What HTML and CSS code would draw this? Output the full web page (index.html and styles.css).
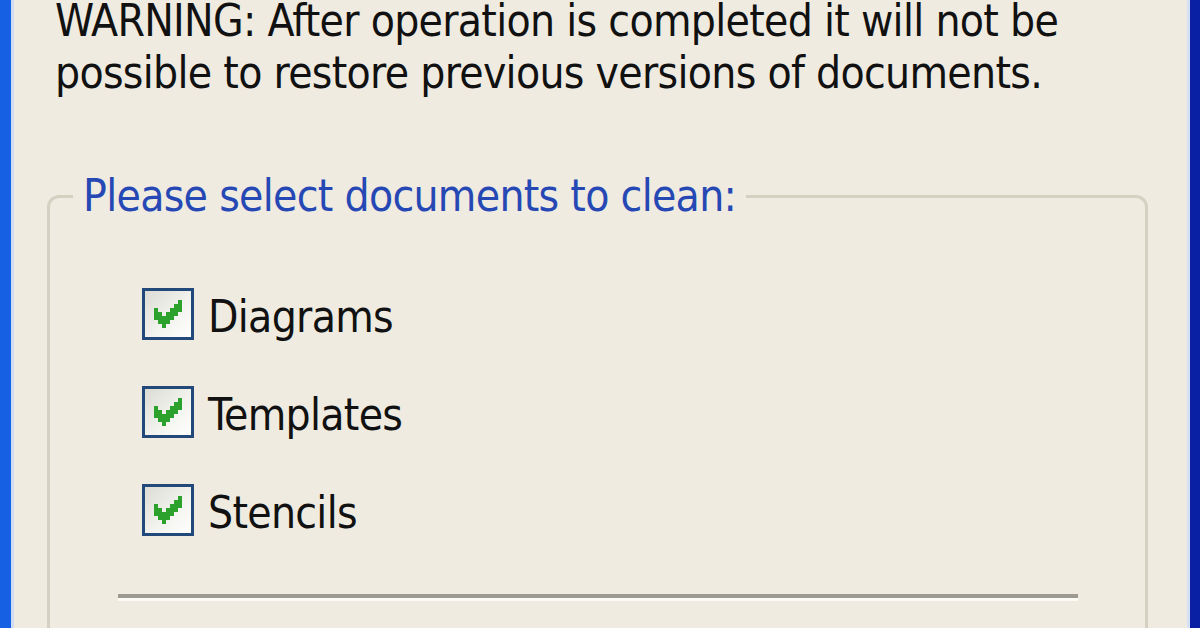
FILE: index.html
```html
<!DOCTYPE html>
<html lang="en">
<head>
<meta charset="utf-8">
<title>Clean documents</title>
<link rel="stylesheet" href="styles.css">
</head>
<body>
<div class="window">
  <div class="frame-left"></div>
  <div class="edge-left"></div>
  <div class="content">
    <p class="warning">WARNING: After operation is completed it will not be<br>possible to restore previous versions of documents.</p>
    <fieldset class="group">
      <legend class="group-title">Please select documents to clean:</legend>
      <ul class="options">
        <li class="option">
          <span class="checkbox"><svg viewBox="0.75 0.75 11.5 11.5" width="46" height="46"><path d="M9 3h1v1h-1zM8 4h2v1h-2zM3 5h1v1h-1zM7 5h3v1h-3zM3 6h2v1h-2zM6 6h3v1h-3zM3 7h5v1h-5zM4 8h3v1h-3zM5 9h1v1h-1z" fill="#2ca12c"/></svg></span>
          <span class="label">Diagrams</span>
        </li>
        <li class="option">
          <span class="checkbox"><svg viewBox="0.75 0.75 11.5 11.5" width="46" height="46"><path d="M9 3h1v1h-1zM8 4h2v1h-2zM3 5h1v1h-1zM7 5h3v1h-3zM3 6h2v1h-2zM6 6h3v1h-3zM3 7h5v1h-5zM4 8h3v1h-3zM5 9h1v1h-1z" fill="#2ca12c"/></svg></span>
          <span class="label">Templates</span>
        </li>
        <li class="option">
          <span class="checkbox"><svg viewBox="0.75 0.75 11.5 11.5" width="46" height="46"><path d="M9 3h1v1h-1zM8 4h2v1h-2zM3 5h1v1h-1zM7 5h3v1h-3zM3 6h2v1h-2zM6 6h3v1h-3zM3 7h5v1h-5zM4 8h3v1h-3zM5 9h1v1h-1z" fill="#2ca12c"/></svg></span>
          <span class="label">Stencils</span>
        </li>
      </ul>
      <div class="separator"></div>
    </fieldset>
  </div>
  <div class="edge-right"></div>
  <div class="frame-right"></div>
</div>
</body>
</html>
```
FILE: styles.css
```css
html, body {
  margin: 0;
  padding: 0;
  background: #efebe1;
}

.window {
  display: flex;
  width: 1200px;
  height: 628px;
  overflow: hidden;
  font-family: "DejaVu Sans Condensed", "DejaVu Sans", sans-serif;
  font-stretch: semi-condensed;
  font-size: 44px;
  line-height: 52px;
  letter-spacing: -0.7px;
  color: #111;
}

.frame-left {
  width: 11px;
  flex: none;
  background: #1660e4;
}

.edge-left {
  width: 3px;
  flex: none;
  background: #cfdcf3;
}

.content {
  flex: 1;
  min-width: 0;
  background: #efebe1;
}

.edge-right {
  width: 3px;
  flex: none;
  background: #d4e1f6;
}

.frame-right {
  width: 10px;
  flex: none;
  background: #0a20a4;
}

.warning {
  margin: -5px 0 0 41px;
  white-space: nowrap;
}

.group {
  margin: 71px 39px 0 33px;
  padding: 0 0 120px 0;
  border: 3px solid #d4d1c2;
  border-radius: 12px;
  min-width: 0;
}

.group-title {
  margin-left: 23px;
  padding: 0 10px;
  color: #2648b4;
  white-space: nowrap;
}

.options {
  list-style: none;
  margin: 66px 0 0 92px;
  padding: 0;
  display: flex;
  flex-direction: column;
  gap: 46px;
}

.option {
  display: flex;
  align-items: flex-start;
  gap: 14px;
  height: 52px;
}

.checkbox {
  flex: none;
  width: 52px;
  height: 52px;
  box-sizing: border-box;
  border: 3px solid #22497a;
  background: linear-gradient(135deg, #dcdcd6 0%, #f2f2ee 55%, #ffffff 100%);
}

.checkbox svg {
  display: block;
}

.label {
  padding-top: 3px;
  white-space: nowrap;
}

.separator {
  margin: 58px 67px 0 68px;
  height: 0;
  border-top: 4px solid #9c9a91;
  border-bottom: 3px solid #fbfaf4;
}
```
